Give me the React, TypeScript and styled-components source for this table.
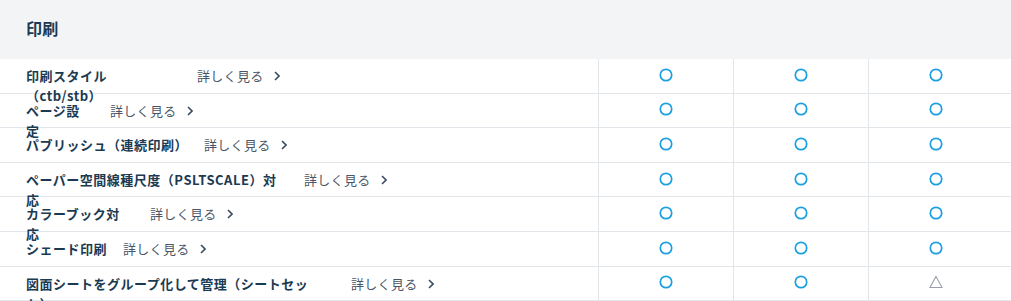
import styled, { createGlobalStyle } from 'styled-components';

const GlobalStyle = createGlobalStyle`
  body {
    margin: 0;
    background: #ffffff;
    font-family: 'Noto Sans CJK JP', 'Noto Sans', sans-serif;
  }
`;

const Section = styled.section`
  width: 1011px;
  height: 301px;
  overflow: hidden;
`;

const SectionHeader = styled.h2`
  margin: 0;
  height: 59px;
  box-sizing: border-box;
  display: flex;
  align-items: center;
  padding: 0 0 3px 26px;
  background-color: #f3f4f6;
  color: #1b3a52;
  font-size: 16px;
  font-weight: 700;
  letter-spacing: 0.2px;
`;

const Row = styled.div`
  display: flex;
  height: 34.6px;
  box-sizing: border-box;
  border-bottom: 1px solid #e2e6ea;
`;

const FeatureCell = styled.div`
  width: 598px;
  box-sizing: border-box;
  padding: 7px 0 0 26px;
  display: flex;
  align-items: flex-start;
`;

const Label = styled.span<{ $width: number }>`
  width: ${(p) => p.$width}px;
  flex-shrink: 0;
  color: #1b3a52;
  font-size: 13px;
  font-weight: 700;
  line-height: 20px;
  letter-spacing: 0.5px;
`;

const MoreLink = styled.a<{ $offset: number }>`
  margin-left: ${(p) => p.$offset}px;
  display: inline-flex;
  align-items: center;
  color: #4a5666;
  font-size: 13px;
  line-height: 20px;
  letter-spacing: 0.3px;
  text-decoration: none;
  cursor: pointer;
  white-space: nowrap;

  svg {
    margin-left: 10px;
  }
`;

const MarkCell = styled.div`
  width: 135px;
  box-sizing: border-box;
  border-left: 1px solid #e2e6ea;
  display: flex;
  align-items: center;
  justify-content: center;
  padding-bottom: 2px;
`;

type Mark = 'ok' | 'partial';

const Circle = () => (
  <svg width="14" height="14" viewBox="0 0 14 14">
    <circle cx="7" cy="7" r="5.7" fill="none" stroke="#1aa0e2" strokeWidth="1.7" />
  </svg>
);

const Triangle = () => (
  <svg width="14" height="14" viewBox="0 0 14 14">
    <path d="M7 1.5 L13 12.5 L1 12.5 Z" fill="none" stroke="#9aa1ad" strokeWidth="1.1" />
  </svg>
);

const Chevron = () => (
  <svg width="6" height="10" viewBox="0 0 6 10">
    <path d="M1 1 L5 5 L1 9" fill="none" stroke="#3b4d63" strokeWidth="1.6" />
  </svg>
);

const rows: { label: string; width: number; offset: number; marks: Mark[] }[] = [
  { label: '印刷スタイル（ctb/stb）', width: 100, offset: 71, marks: ['ok', 'ok', 'ok'] },
  { label: 'ページ設定', width: 58, offset: 26, marks: ['ok', 'ok', 'ok'] },
  { label: 'パブリッシュ（連続印刷）', width: 164, offset: 14, marks: ['ok', 'ok', 'ok'] },
  { label: 'ペーパー空間線種尺度（PSLTSCALE）対応', width: 254, offset: 24, marks: ['ok', 'ok', 'ok'] },
  { label: 'カラーブック対応', width: 98, offset: 26, marks: ['ok', 'ok', 'ok'] },
  { label: 'シェード印刷', width: 84, offset: 13, marks: ['ok', 'ok', 'ok'] },
  { label: '図面シートをグループ化して管理（シートセット）', width: 285, offset: 40, marks: ['ok', 'ok', 'partial'] },
];

const App = () => {
  return (
    <Section>
      <GlobalStyle />
      <SectionHeader>印刷</SectionHeader>
      {rows.map((row) => (
        <Row key={row.label}>
          <FeatureCell>
            <Label $width={row.width}>{row.label}</Label>
            <MoreLink $offset={row.offset}>
              詳しく見る
              <Chevron />
            </MoreLink>
          </FeatureCell>
          {row.marks.map((m, i) => (
            <MarkCell key={i}>{m === 'ok' ? <Circle /> : <Triangle />}</MarkCell>
          ))}
        </Row>
      ))}
    </Section>
  );
};

export default App;
